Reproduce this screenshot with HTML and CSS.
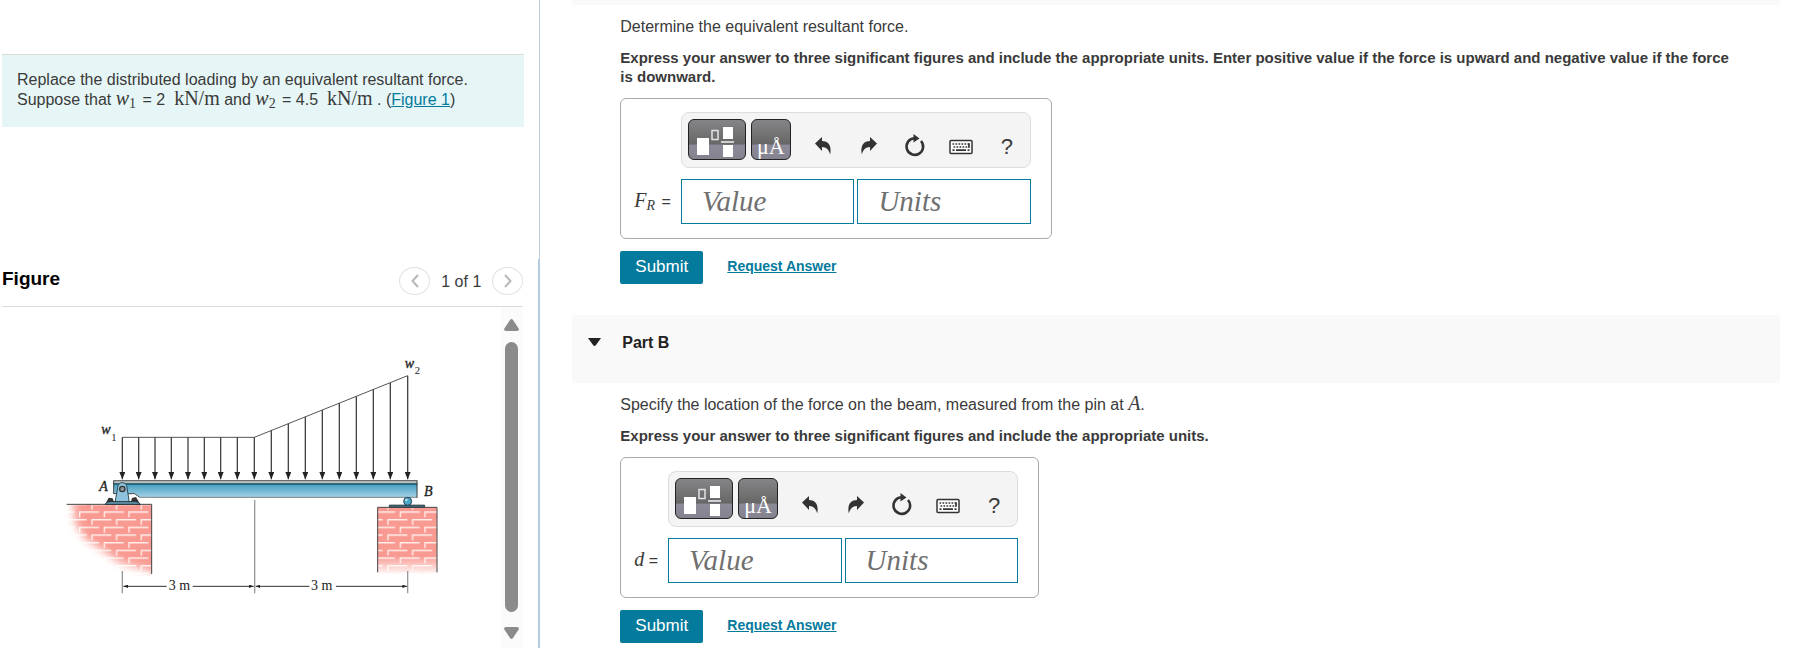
FILE: index.html
```html
<!DOCTYPE html>
<html lang="en">
<head>
	<meta charset="UTF-8">
	<title>Resultant force</title>
	<link rel="stylesheet" href="styles.css">
</head>
<body>

<!-- shared icons -->
<svg class="defs" width="0" height="0" aria-hidden="true">
	<symbol id="templates" viewBox="0 0 58 41">
		<path fill="#fff" d="M9 19h12v17H9zM35 8h10v12H35zM35 26h10v12H35z"/>
		<path fill="none" stroke="#e4e4e8" d="M24 11.500h6v9h-6z" stroke-width="1.500"/>
		<path fill="#cfcfd4" d="M33 22h13v2H33z"/>
	</symbol>
	<symbol id="undo" viewBox="0 0 18 20">
		<path fill="#333" d="M1 7.500 8 1v4c6 0 10 4 8.200 13.500C15 14 12.500 11 8 11v4z"/>
	</symbol>
	<symbol id="reset" viewBox="0 0 22 24">
		<path fill="none" stroke="#333" stroke-width="2.600" d="M10 4.300a8.300 8.300 0 1 0 7 2.700"/>
		<path fill="#333" d="M9.500 0l6 4.500-6 4z"/>
	</symbol>
	<symbol id="keyboard" viewBox="0 0 24 18">
		<rect x="1" y="3.500" width="22" height="13" rx="1" fill="#fff" stroke="#333" stroke-width="1.500"/>
		<path stroke="#333" stroke-width="1.700" stroke-dasharray="1.700 1.300" d="M3.500 7H20M4.500 10H20"/>
		<path stroke="#333" stroke-width="1.700" d="M3.500 13.200h2M7 13.200h10M18.500 13.200h2M20 6.200v4.500"/>
	</symbol>
</svg>

<main class="page">
	<div class="left">
		<section class="question">
			<div class="prompt">
				Replace the distributed loading by an equivalent resultant force.
				<br>
				Suppose that <span class="math"><i>w</i><sub>1</sub></span> = 2 &nbsp;<span class="math">kN/m</span> and <span class="math"><i>w</i><sub>2</sub></span> = 4.5 &nbsp;<span class="math">kN/m</span> . (<a href="#figure">Figure 1</a>)
			</div>
		</section>

		<section class="figure" id="figure">
			<header class="figure_head">
				<h2>Figure</h2>
				<div class="pager">
					<button type="button" aria-label="Previous figure"><svg width="8" height="14" viewBox="0 0 8 14"><path d="M7 1 1.500 7 7 13"/></svg></button>
					<span>1 of 1</span>
					<button type="button" aria-label="Next figure"><svg width="8" height="14" viewBox="0 0 8 14"><path d="M1 1l5.500 6L1 13"/></svg></button>
				</div>
			</header>
			<div class="figure_body">
				<svg class="beam" viewBox="0 0 1200 780" role="img" aria-label="Beam with distributed load">
					<defs>
						<linearGradient id="steel" x1="0" y1="0" x2="0" y2="1">
							<stop offset="0" stop-color="#3d9cbd"/>
							<stop offset="1" stop-color="#a5d2e8"/>
						</linearGradient>
						<linearGradient id="fadeDown" x1="0" y1="0" x2="0" y2="1">
							<stop offset="0.720" stop-color="#fff"/>
							<stop offset="1" stop-color="#000"/>
						</linearGradient>
						<pattern id="brick" x="57" y="514" width="74" height="46" patternUnits="userSpaceOnUse">
							<rect width="74" height="46" fill="#f99a92"/>
							<path fill="none" stroke="#fff0ec" stroke-width="4" d="M2 18V2h58M39 41V25h35M0 25h23"/>
						</pattern>
						<filter id="soft" x="-20%" y="-20%" width="140%" height="140%"><feGaussianBlur stdDeviation="13"/></filter>
						<mask id="leftMask" maskUnits="userSpaceOnUse" x="0" y="493" width="276" height="220">
							<path fill="#fff" filter="url(#soft)" d="M35 440H330V715L270 692 180 668 130 632 75 596 45 548z"/>
						</mask>
						<mask id="rightMask" maskUnits="userSpaceOnUse" x="950" y="500" width="184" height="210">
							<rect x="950" y="500" width="184" height="206" fill="url(#fadeDown)"/>
						</mask>
						<marker id="load" markerUnits="userSpaceOnUse" markerWidth="24" markerHeight="18" refX="22" refY="9" orient="auto">
							<path fill="#222" d="M0 0 22 9 0 18z"/>
						</marker>
						<marker id="dim" markerUnits="userSpaceOnUse" markerWidth="16" markerHeight="10" refX="14" refY="5" orient="auto-start-reverse">
							<path fill="#222" d="M0 0 14 5 0 10z"/>
						</marker>
					</defs>

					<!-- supports -->
					<g mask="url(#leftMask)"><rect x="10" y="493" width="265" height="215" fill="url(#brick)"/></g>
					<path class="edge" d="M20 493H275V702"/>
					<g mask="url(#rightMask)"><rect x="953" y="502" width="178" height="206" fill="url(#brick)"/></g>
					<path class="edge" d="M953 697V502H1131V697"/>

					<!-- beam -->
					<path fill="url(#steel)" d="M160 430H1072V472H238L226 461H160z"/>
					<path fill="#b9c3c4" d="M160 422H1072V430H160z"/>
					<path class="thin" d="M160 422H1072"/>
					<path stroke="#1f5062" stroke-width="4" d="M160 432H1072"/>
					<path class="edge" d="M161 422V461H224L238 471"/>
					<path stroke="#8b9698" stroke-width="4" d="M238 472H1072"/>
					<path class="edge" d="M1071 422V473"/>

					<!-- pin and roller -->
					<path fill="#333" d="M138 488l8-15 12 2 5 13zM212 488l4-14 12-3 10 17z"/>
					<path fill="#8fc3dd" stroke="#2b4a58" stroke-width="3" d="M165 488 173 442a14 14 0 0 1 28 0L208 488z"/>
					<circle cx="187" cy="447" r="8" fill="#8b999f" stroke="#333" stroke-width="4"/>
					<path fill="#5f98b0" stroke="#26343a" stroke-width="3" d="M135 493q4-8 14-8h78q10 0 14 8z"/>
					<path fill="#466773" stroke="#26343a" stroke-width="2" d="M988 495h106v7H988z"/>
					<circle cx="1043" cy="484" r="12" fill="#4ba5c6" stroke="#214655" stroke-width="3"/>
					<circle cx="1039" cy="480" r="4" fill="#b4dfee"/>

					<!-- distributed load -->
					<path class="thin" d="M187 292H583L1043 107"/>
					<g class="load">
						<path d="M187 292V418"/>
						<path d="M236 292V418"/>
						<path d="M285 292V418"/>
						<path d="M334 292V418"/>
						<path d="M384 292V418"/>
						<path d="M433 292V418"/>
						<path d="M482 292V418"/>
						<path d="M532 292V418"/>
						<path d="M583 292V418"/>
						<path d="M634 271V418"/>
						<path d="M685 251V418"/>
						<path d="M736 230V418"/>
						<path d="M787 210V418"/>
						<path d="M838 189V418"/>
						<path d="M889 169V418"/>
						<path d="M940 148V418"/>
						<path d="M991 128V418"/>
						<path d="M1043 107V418"/>
					</g>

					<!-- dimensions -->
					<path class="guide" d="M187 693V760M584 480V760M1043 693V760"/>
					<g class="dim">
						<path marker-start="url(#dim)" d="M190 739H320"/>
						<path marker-end="url(#dim)" d="M398 739H581"/>
						<path marker-start="url(#dim)" d="M587 739H748"/>
						<path marker-end="url(#dim)" d="M828 739H1041"/>
					</g>
					<text x="326" y="750">3 m</text>
					<text x="753" y="750">3 m</text>
					<text class="var" x="124" y="283">w</text><text class="small" x="154" y="303">1</text>
					<text class="var" x="1034" y="85">w</text><text class="small" x="1064" y="103">2</text>
					<text class="var" x="118" y="454">A</text>
					<text class="var" x="1092" y="467">B</text>
				</svg>
				<div class="scroll">
					<svg width="15" height="12" viewBox="0 0 15 12"><path fill="#8b8b8b" d="M6 1q1.500-2 3 0l6 9q0 2-2 2H2q-2 0-2-2z"/></svg>
					<div class="thumb"></div>
					<svg width="15" height="12" viewBox="0 0 15 12"><path fill="#8b8b8b" d="M6 11q1.500 2 3 0l6-9q0-2-2-2H2Q0 0 0 2z"/></svg>
				</div>
			</div>
		</section>
	</div>

	<div class="right">
		<div class="part_a_end"></div>
		<form class="part">
			<p>Determine the equivalent resultant force.</p>
			<p class="bold">Express your answer to three significant figures and include the appropriate units. Enter positive value if the force is upward and negative value if the force is downward.</p>
			<div class="answer">
				<div class="toolbar">
					<button type="button" class="dark wide" aria-label="Templates"><svg width="58" height="41"><use href="#templates"/></svg></button>
					<button type="button" class="dark" aria-label="Symbols">μÅ</button>
					<div class="tools">
						<button type="button" aria-label="Undo"><svg width="18" height="20"><use href="#undo"/></svg></button>
						<button type="button" aria-label="Redo"><svg class="flip" width="18" height="20"><use href="#undo"/></svg></button>
						<button type="button" aria-label="Reset"><svg width="22" height="24"><use href="#reset"/></svg></button>
						<button type="button" aria-label="Keyboard"><svg width="24" height="18"><use href="#keyboard"/></svg></button>
						<button type="button" aria-label="Help">?</button>
					</div>
				</div>
				<label for="fr_value"><span class="math"><i>F</i><sub><i>R</i></sub></span> =</label>
				<div class="fields">
					<input type="text" id="fr_value" placeholder="Value">
					<input type="text" aria-label="Units" placeholder="Units">
				</div>
			</div>
			<div class="actions">
				<button type="submit" class="submit">Submit</button>
				<a href="#answer">Request Answer</a>
			</div>
		</form>

		<button type="button" class="part_head"><svg width="13" height="8" viewBox="0 0 13 8"><path fill="#222" d="M0 0h13L8 7q-1.500 2-3 0z"/></svg>Part B</button>

		<form class="part">
			<p>Specify the location of the force on the beam, measured from the pin at <span class="math"><i>A</i></span>.</p>
			<p class="bold">Express your answer to three significant figures and include the appropriate units.</p>
			<div class="answer">
				<div class="toolbar">
					<button type="button" class="dark wide" aria-label="Templates"><svg width="58" height="41"><use href="#templates"/></svg></button>
					<button type="button" class="dark" aria-label="Symbols">μÅ</button>
					<div class="tools">
						<button type="button" aria-label="Undo"><svg width="18" height="20"><use href="#undo"/></svg></button>
						<button type="button" aria-label="Redo"><svg class="flip" width="18" height="20"><use href="#undo"/></svg></button>
						<button type="button" aria-label="Reset"><svg width="22" height="24"><use href="#reset"/></svg></button>
						<button type="button" aria-label="Keyboard"><svg width="24" height="18"><use href="#keyboard"/></svg></button>
						<button type="button" aria-label="Help">?</button>
					</div>
				</div>
				<label for="d_value"><span class="math"><i>d</i></span> =</label>
				<div class="fields">
					<input type="text" id="d_value" placeholder="Value">
					<input type="text" aria-label="Units" placeholder="Units">
				</div>
			</div>
			<div class="actions">
				<button type="submit" class="submit">Submit</button>
				<a href="#answer">Request Answer</a>
			</div>
		</form>
	</div>
</main>

</body>
</html>
```

FILE: styles.css
```css
*{
	margin: 0;
	padding: 0;
	box-sizing: border-box;
}
body{
	font: 16px/19px "Liberation Sans", Arial, sans-serif;
	color: #3a3a3a;
	background: #fff;
}
button{
	font: inherit;
	color: inherit;
	border: none;
	background: none;
	cursor: pointer;
}
a{
	color: #047a9c;
}
svg{
	display: block;
}
.defs{
	position: absolute;
}
.math{
	font-family: "Liberation Serif", "Times New Roman", serif;
	font-size: 20px;
	line-height: 1px;
}
.math sub{
	margin-right: 2px;
	font-size: 14px;
	line-height: 1px;
	vertical-align: -3px;
}

.page{
	display: flex;
	min-height: 100vh;
}

/* left column */
.left{
	flex: 0 0 30%;
	display: flex;
	flex-direction: column;
}
.question{
	min-height: 259px;
	padding: 54px 15px 0 2px;
	border-right: 1px solid #bccfe2;
}
.prompt{
	padding: 15px 15px 17px;
	line-height: 20px;
	background: #e6f6f6;
	border-top: 1px solid #d8dcdc;
}
.figure{
	flex: 1;
	display: flex;
	flex-direction: column;
	padding: 0 15px 0 2px;
	border-right: 2px solid #b5cbe0;
}
.figure_head{
	display: flex;
	justify-content: space-between;
	align-items: flex-start;
	padding: 8px 0 11px;
	border-bottom: 1px solid #dcdcdc;
}
.figure_head h2{
	font-size: 19px;
	line-height: 24px;
	color: #000;
}
.pager{
	display: flex;
	align-items: center;
	gap: 11px;
}
.pager button{
	display: flex;
	align-items: center;
	justify-content: center;
	width: 31px;
	height: 28px;
	border: 1px solid #e2e2e2;
	border-radius: 50%;
}
.pager path{
	fill: none;
	stroke: #b8b8b8;
	stroke-width: 2;
}
.figure_body{
	flex: 1;
	display: flex;
	justify-content: space-between;
}
.beam{
	width: 400px;
	height: 260px;
	margin: 33px 0 0 58px;
	font-family: "Liberation Serif", "Times New Roman", serif;
	font-size: 42px;
	fill: #222;
}
.beam .edge{
	fill: none;
	stroke: #444;
	stroke-width: 3;
}
.beam .thin{
	fill: none;
	stroke: #555;
	stroke-width: 3;
}
.beam .load path{
	stroke: #444;
	stroke-width: 4;
	marker-end: url(#load);
}
.beam .guide{
	stroke: #999;
	stroke-width: 4;
}
.beam .dim path{
	stroke: #333;
	stroke-width: 3;
}
.beam .var{
	font-style: italic;
	stroke: #222;
}
.beam .small{
	font-size: 32px;
}
.scroll{
	display: flex;
	flex-direction: column;
	align-items: center;
	gap: 11px;
	width: 22px;
	padding: 12px 2px 9px 0;
	background: #fbfbfb;
}
.thumb{
	flex: 1;
	width: 13px;
	margin-bottom: 4px;
	border-radius: 7px;
	background: #8b8b8b;
}

/* right column */
.right{
	flex: 1;
	padding: 0 21px 0 32px;
}
.part_a_end{
	height: 5px;
	background: #f9f9f9;
}
.part{
	padding: 12px 0 0 48px;
}
.part p{
	margin-bottom: 12px;
	padding-right: 40px;
}
.part .bold{
	font-size: 15px;
	font-weight: bold;
}
.answer{
	display: inline-grid;
	grid-template-columns: auto 350px;
	gap: 11px 10px;
	align-items: center;
	padding: 13px 20px 14px 13px;
	border: 1px solid #aaa;
	border-radius: 6px;
	vertical-align: top;
}
.toolbar{
	grid-column: 2;
	display: flex;
	gap: 5px;
	height: 56px;
	padding: 6px 0 6px 6px;
	border: 1px solid #ddd;
	border-radius: 8px;
	background: #f4f4f4;
}
.dark{
	flex: none;
	width: 40px;
	height: 41px;
	padding-top: 14px;
	font: 22px/24px "Liberation Serif", "Times New Roman", serif;
	color: #fff;
	border: 1px solid #222;
	border-radius: 6px;
	background: linear-gradient(#858588, #666 62%, #8d8b99 64%, #84828e);
}
.wide{
	width: 58px;
	padding: 0;
}
.wide svg{
	margin: -1px;
}
.tools{
	display: flex;
	align-items: center;
	height: 54px;
	padding-left: 4px;
}
.tools button{
	display: flex;
	align-items: center;
	justify-content: center;
	width: 46px;
	height: 40px;
	font-size: 22px;
}
.flip{
	transform: scaleX(-1);
}
.fields{
	display: flex;
	gap: 3px;
}
.fields input{
	flex: 1;
	min-width: 0;
	height: 45px;
	padding: 0 20px;
	font: italic 29px "Liberation Serif", "Times New Roman", serif;
	color: #333;
	border: 1px solid #047a9c;
	background: #fff;
}
.fields input::placeholder{
	color: #707070;
}
.actions{
	display: flex;
	align-items: center;
	gap: 24px;
	margin-top: 12px;
}
.submit{
	width: 83px;
	height: 33px;
	padding-bottom: 2px;
	font-size: 17px;
	color: #fff;
	border-radius: 2px;
	background: #047a9c;
}
.actions a{
	padding-bottom: 2px;
	font-size: 14px;
	font-weight: bold;
}
.part_head{
	display: flex;
	align-items: center;
	gap: 21px;
	width: 100%;
	height: 68px;
	margin-top: 31px;
	padding: 0 16px 14px;
	font-weight: bold;
	color: #222;
	background: #f9f9f9;
}
```
